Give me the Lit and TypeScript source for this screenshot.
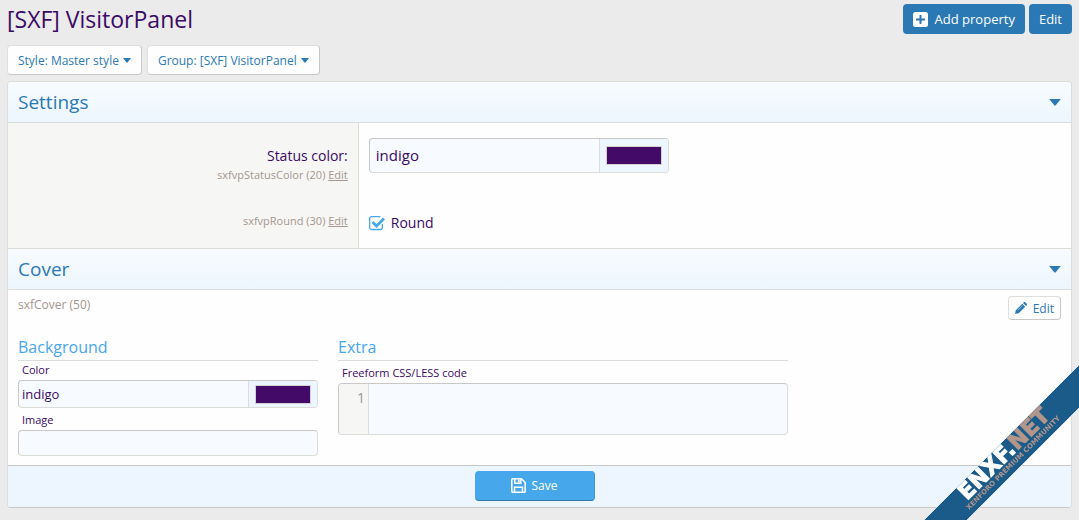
import { LitElement, html, css, svg } from "lit";
import { customElement, property, state } from "lit/decorators.js";

const caret = html`<svg class="caret" viewBox="0 0 10 6" aria-hidden="true"><path d="M0 0h10L5.6 5.400a.8.8 0 0 1-1.200 0z" fill="currentColor"/></svg>`;

@customElement("color-field")
export class ColorField extends LitElement {
  @property() value = "";
  @property() label = "";
  @property({ type: Boolean, reflect: true }) small = false;

  static styles = css`
    :host { display: flex; box-sizing: border-box; height: 35px; max-width: 300px; border: 1px solid #dcdcd8; border-top-color: #c8c8c8; border-left-color: #c8c8c8; border-radius: 4px; overflow: hidden; background: #f7fbff; }
    :host([small]) { height: 28px; }
    input { flex: 1; min-width: 0; box-sizing: border-box; border: 0; padding: 0 6px 2px; background: transparent; color: #3a0a66; font: 15px "Open Sans", "Noto Sans", sans-serif; outline: none; }
    :host([small]) input { padding: 0 3px; font-size: 13px; }
    button { flex: none; width: 69px; padding: 6px; display: flex; align-items: center; border: 0; border-left: 1px solid #dcdcd8; background: #edf6fe; }
    span { box-sizing: border-box; width: 56px; height: 19px; border: 1px solid #d2d2d0; background: #440a67; }
  `;

  render() {
    return html`
      <input type="text" aria-label=${this.label} .value=${this.value} />
      <button type="button" aria-label="Color picker"><span></span></button>
    `;
  }
}

@customElement("app-root")
export class AppRoot extends LitElement {
  @state() private round = true;

  static styles = css`
    :host { display: block; box-sizing: border-box; min-height: 100vh; padding: 4px 7px 12px; background: #ebebeb; color: #3a0a66; font: 15px/20px "Open Sans", "Noto Sans", sans-serif; }
    * { box-sizing: border-box; }
    button { font-family: inherit; cursor: pointer; }
    h1, h2, h3 { margin: 0; font-weight: 400; }
    svg { flex: none; display: block; }
    .top { display: flex; justify-content: space-between; align-items: flex-start; }
    h1 { font-size: 23px; line-height: 30px; }
    .actions { display: flex; gap: 4px; }
    .primary { display: flex; align-items: center; gap: 7px; height: 30px; padding: 0 10px; border: 0; border-radius: 4px; background: #2a79b5; color: #fff; font-size: 13px; }
    .menus { display: flex; gap: 5px; margin: 11px 0 6px; }
    .menu { display: flex; align-items: center; gap: 4px; height: 30px; padding: 0 10px; border: 1px solid #dedede; border-right-color: #c8c8c8; border-bottom-color: #c8c8c8; border-radius: 4px; background: #fefefe; color: #2a79b5; font-size: 12px; }
    .menu .caret { width: 8px; height: 5px; }
    .panel { border: 1px solid #dcdcdc; border-bottom-color: #c8c8c8; border-radius: 4px; background: #fefefe; overflow: hidden; }
    .head { border-bottom: 1px solid #dcdcd8; background: linear-gradient(#f7fbff, #edf6fe); }
    .head button { display: flex; justify-content: space-between; align-items: center; width: 100%; height: 40px; padding: 0 10px; border: 0; background: none; color: #2a79b5; font-size: 19px; }
    .head .caret { width: 12px; height: 7px; }
    .row { display: grid; grid-template-columns: 33% 1fr; }
    .name { padding: 15px 10px; border-right: 1px solid #dcdcd8; background: #f6f6f5; text-align: right; }
    .name label { display: block; margin-top: 8px; font-size: 14px; }
    .hint { color: #a5968f; font-size: 11px; line-height: 18px; }
    .meta .hint { font-size: 12px; }
    .hint a { color: inherit; }
    .value { padding: 15px 10px; }
    .last { border-bottom: 1px solid #dcdcd8; }
    .last .name { padding-top: 13px; }
    .last .value { padding-top: 14px; }
    .check { display: flex; align-items: center; gap: 6px; width: max-content; font-size: 14px; }
    .box { display: grid; }
    .box > * { grid-area: 1 / 1; }
    .box input { appearance: none; width: 16px; height: 16px; margin: 0; }
    .box svg { width: 16px; height: 16px; pointer-events: none; }
    .cover { padding: 6px 10px 9px; }
    .meta { display: flex; justify-content: space-between; align-items: flex-start; }
    .edit { display: flex; align-items: center; gap: 6px; height: 24px; padding: 0 6px; border: 1px solid #dedede; border-right-color: #c8c8c8; border-bottom-color: #c8c8c8; border-radius: 4px; background: #fefefe; color: #2a79b5; font-size: 12px; }
    .cols { display: flex; gap: 20px; margin-top: 15px; }
    .bg { flex: 0 1 300px; min-width: 0; }
    .extra { flex: 0 1 450px; min-width: 0; }
    h3 { height: 26px; border-bottom: 1px solid #dcdcd8; color: #47a7eb; font-size: 16px; line-height: 24px; }
    .small { display: block; padding: 0 4px 2px; font-size: 11px; line-height: 17px; }
    .bg .small + input { display: block; width: 100%; height: 26px; border: 1px solid #dcdcd8; border-top-color: #c8c8c8; border-left-color: #c8c8c8; border-radius: 4px; background: #f7fbff; }
    .bg color-field + .small, .extra .small { padding-top: 3px; }
    .editor { display: flex; height: 52px; border: 1px solid #dcdcd8; border-top-color: #c8c8c8; border-left-color: #c8c8c8; border-radius: 4px; overflow: hidden; background: #f7fbff; }
    .gutter { width: 30px; padding: 4px 3px; border-right: 1px solid #dcdcd8; background: #f6f6f5; color: #999; font-size: 14px; text-align: right; }
    textarea { flex: 1; min-width: 0; padding: 5px 4px; border: 0; background: transparent; resize: none; outline: none; font: 13px/20px "Liberation Mono", monospace; }
    .foot { display: flex; justify-content: center; padding: 5px 20px 6px 10px; border-top: 1px solid #c8c8c8; background: #edf6fe; }
    .save { justify-content: center; gap: 6px; width: 120px; background: #47a7eb; border-right: 1px solid #3d95d6; border-bottom: 1px solid #2a79b5; font-size: 12px; }
    .ribbon { position: fixed; right: 0; bottom: 0; width: 156px; height: 156px; pointer-events: none; }
    .brand { font: 700 22px "DejaVu Sans", sans-serif; fill: #fff; stroke: #fff; stroke-width: 1px; }
    .net { fill: #b3968a; stroke: #b3968a; }
    .tag { font: 700 7px "DejaVu Sans", sans-serif; fill: #b3968a; }
  `;

  private header(title: string) {
    return html`<h2 class="head"><button type="button" aria-expanded="true">${title}${caret}</button></h2>`;
  }

  render() {
    return html`
      <header class="top">
        <h1>[SXF] VisitorPanel</h1>
        <div class="actions">
          <button class="primary" type="button">
            <svg width="15" height="15" viewBox="0 0 15 15"><path fill="#fff" fill-rule="evenodd" d="M2.500 0h10A2.500 2.500 0 0 1 15 2.500v10a2.500 2.500 0 0 1-2.500 2.500h-10A2.500 2.500 0 0 1 0 12.500v-10A2.500 2.500 0 0 1 2.500 0zM6.500 3v3.500H3v2h3.500V12h2V8.500H12v-2H8.500V3z"/></svg>
            Add property
          </button>
          <button class="primary" type="button">Edit</button>
        </div>
      </header>
      <nav class="menus">
        <button class="menu" type="button" aria-haspopup="menu">Style: Master style ${caret}</button>
        <button class="menu" type="button" aria-haspopup="menu">Group: [SXF] VisitorPanel ${caret}</button>
      </nav>
      <form class="panel">
        ${this.header("Settings")}
        <div class="row">
          <div class="name">
            <label id="status">Status color:</label>
            <div class="hint">sxfvpStatusColor (20) <a href="#status">Edit</a></div>
          </div>
          <div class="value"><color-field label="Status color" value="indigo"></color-field></div>
        </div>
        <div class="row last">
          <div class="name"><div class="hint">sxfvpRound (30) <a href="#round">Edit</a></div></div>
          <div class="value">
            <label class="check" for="round">
              <span class="box">
                <input id="round" type="checkbox" .checked=${this.round}
                  @change=${(e: Event) => (this.round = (e.target as HTMLInputElement).checked)} />
                <svg viewBox="0 0 16 16" fill="none" stroke="#47a7eb">
                  <path d="M13.300 9v3.500a2 2 0 0 1-2 2H2.700a2 2 0 0 1-2-2V3.700a2 2 0 0 1 2-2h8.600" stroke-width="1.300"/>
                  ${this.round ? svg`<path d="M3.500 7l4 4L15 3.500" stroke-width="2.800"/>` : ""}
                </svg>
              </span>
              Round
            </label>
          </div>
        </div>
        ${this.header("Cover")}
        <div class="cover">
          <div class="meta">
            <span class="hint">sxfCover (50)</span>
            <button class="edit" type="button">
              <svg width="12" height="12" viewBox="0 0 12 12" fill="#2a79b5"><path d="M.8 8.300L7.300 1.800l2.900 2.900-6.500 6.500L0 12zM8 1.100L8.800.3q.7-.6 1.400 0l1.500 1.500q.6.700 0 1.400l-.8.8z"/><path d="M2.800 8.200l4.700-4.700" stroke="#fff" stroke-width=".5"/></svg>
              Edit
            </button>
          </div>
          <div class="cols">
            <section class="bg">
              <h3>Background</h3>
              <label class="small">Color</label>
              <color-field small label="Color" value="indigo"></color-field>
              <label class="small" for="image">Image</label>
              <input id="image" type="text" />
            </section>
            <section class="extra">
              <h3>Extra</h3>
              <label class="small" for="code">Freeform CSS/LESS code</label>
              <div class="editor"><div class="gutter">1</div><textarea id="code" spellcheck="false"></textarea></div>
            </section>
          </div>
        </div>
        <div class="foot">
          <button class="primary save" type="button">
            <svg width="15" height="15" viewBox="0 0 15 15" fill="none" stroke="#fff" stroke-width="1.500"><path d="M.8 1.500q0-.7.700-.7h9l3.700 3.700v9q0 .7-.7.700h-12q-.7 0-.7-.7z"/><path d="M3.500 14V9.300h8V14M3.800 1v4.200h6V1"/><path d="M7.800 1.500v3" stroke-width="1.800"/></svg>
            Save
          </button>
        </div>
      </form>
      <svg class="ribbon" viewBox="0 0 156 156" role="img" aria-label="ENXF.NET Xenforo Premium Community">
        <path d="M0 157L157 0v43L43 157z" fill="#1b5b8a"/>
        <path d="M0 157L157 0M43 157L157 43" stroke="#fff" stroke-opacity=".7"/>
        <g transform="translate(44 137) rotate(-45)">
          <text class="brand">ENXF.<tspan class="net">NET</tspan></text>
          <text class="tag" x="-5" y="8">XENFORO PREMIUM COMMUNITY</text>
        </g>
      </svg>
    `;
  }
}
